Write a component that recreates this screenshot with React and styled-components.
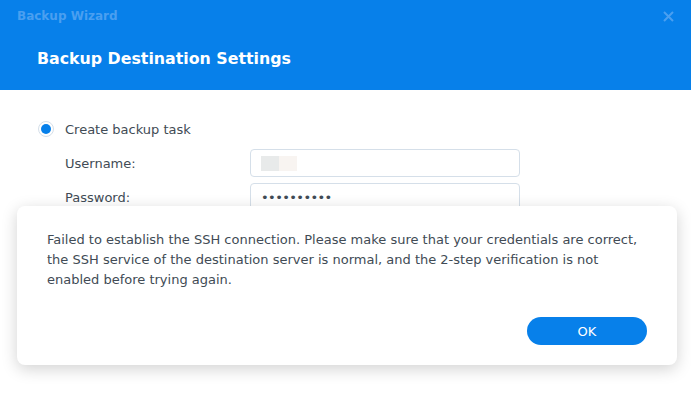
import React from 'react';
import styled, { createGlobalStyle } from 'styled-components';

const Global = createGlobalStyle`
  html, body {
    margin: 0;
    padding: 0;
    background: #fff;
  }
  body {
    font-family: "DejaVu Sans", Verdana, sans-serif;
    color: #414b55;
  }
`;

const Window = styled.div`
  position: relative;
  width: 691px;
  height: 395px;
  overflow: hidden;
  background: #fff;
`;

const Header = styled.div`
  height: 90px;
  background: #0780ea;
  box-sizing: border-box;
  padding: 8px 17px 0 17px;
  display: flex;
  flex-direction: column;
`;

const TitleBar = styled.div`
  display: flex;
  justify-content: space-between;
  align-items: center;
  height: 16px;
`;

const WindowTitle = styled.div`
  font-size: 12px;
  font-weight: bold;
  color: #4a9ff0;
`;

const CloseButton = styled.div`
  width: 16px;
  height: 16px;
  margin-right: -2px;
  display: flex;
  align-items: center;
  justify-content: center;
`;

const PageTitle = styled.h1`
  margin: 25px 0 0 20px;
  font-size: 15.8px;
  font-weight: bold;
  color: #fff;
  line-height: 20px;
`;

const Body = styled.div`
  padding: 30px 0 0 38px;
  display: flex;
  flex-direction: column;
`;

const RadioRow = styled.label`
  display: flex;
  align-items: center;
  gap: 11px;
  font-size: 13px;
  height: 18px;
  color: #414b55;
`;

const Radio = styled.span`
  width: 16px;
  height: 16px;
  border-radius: 50%;
  border: 1px solid #d5dfe9;
  box-sizing: border-box;
  display: flex;
  align-items: center;
  justify-content: center;
  &::after {
    content: '';
    width: 10px;
    height: 10px;
    border-radius: 50%;
    background: #0780ea;
  }
`;

const FieldGrid = styled.div`
  display: grid;
  grid-template-columns: 185px 270px;
  row-gap: 6px;
  margin: 11px 0 0 27px;
  align-items: center;
`;

const FieldLabel = styled.span`
  font-size: 13px;
  color: #414b55;
`;

const Field = styled.div`
  height: 28px;
  box-sizing: border-box;
  border: 1px solid #d5dfe9;
  border-radius: 4px;
  display: flex;
  align-items: center;
  padding-left: 10px;
  font-size: 13px;
`;

const Blur = styled.span`
  width: 18px;
  height: 15px;
  background: ${p => p.$tone};
`;

const Dots = styled.span`
  letter-spacing: -0.6px;
  color: #414b55;
  font-size: 13px;
`;

const Dialog = styled.div`
  position: absolute;
  left: 17px;
  top: 206px;
  width: 660px;
  height: 159px;
  box-sizing: border-box;
  background: #fff;
  border-radius: 8px;
  box-shadow: 0 4px 16px rgba(0, 0, 0, 0.18);
  padding: 24px 30px 20px 30px;
  display: flex;
  flex-direction: column;
`;

const Message = styled.p`
  margin: 0;
  font-size: 13px;
  line-height: 20px;
  color: #414b55;
`;

const Actions = styled.div`
  margin-top: auto;
  display: flex;
  justify-content: flex-end;
`;

const OkButton = styled.button`
  width: 120px;
  height: 28px;
  border: none;
  border-radius: 14px;
  background: #0780ea;
  color: #fff;
  font-family: inherit;
  font-size: 13px;
  padding: 0;
`;

export default function App() {
  return (
    <Window>
      <Global />
      <Header>
        <TitleBar>
          <WindowTitle>Backup Wizard</WindowTitle>
          <CloseButton>
            <svg width="11" height="11" viewBox="0 0 11 11">
              <path d="M1 1 L10 10 M10 1 L1 10" stroke="#4a9ff0" strokeWidth="2" />
            </svg>
          </CloseButton>
        </TitleBar>
        <PageTitle>Backup Destination Settings</PageTitle>
      </Header>
      <Body>
        <RadioRow>
          <Radio />
          Create backup task
        </RadioRow>
        <FieldGrid>
          <FieldLabel>Username:</FieldLabel>
          <Field>
            <Blur $tone="#e8eaea" />
            <Blur $tone="#f8f4f1" />
          </Field>
          <FieldLabel>Password:</FieldLabel>
          <Field>
            <Dots>••••••••••</Dots>
          </Field>
        </FieldGrid>
      </Body>
      <Dialog>
        <Message>
          Failed to establish the SSH connection. Please make sure that your credentials are correct,
          the SSH service of the destination server is normal, and the 2-step verification is not
          enabled before trying again.
        </Message>
        <Actions>
          <OkButton>OK</OkButton>
        </Actions>
      </Dialog>
    </Window>
  );
}
